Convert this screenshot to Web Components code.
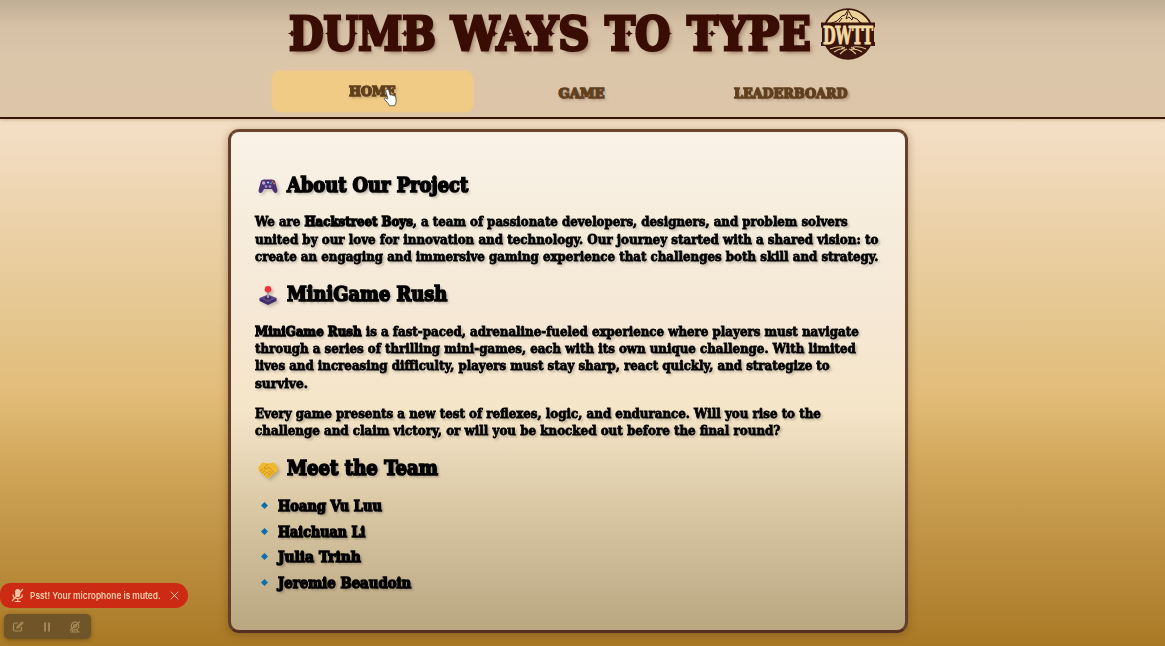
<!DOCTYPE html>
<html lang="en">
<head>
<meta charset="utf-8">
<title>Dumb Ways to Type</title>
<style>
html,body{margin:0;height:100%;overflow:hidden}
body{font-family:"DejaVu Serif","Liberation Serif",serif;font-weight:bold;color:#020100}
</style>
</head>
<body>
<dwtt-app></dwtt-app>
<script>
const define = (name, html, ready) => {
  const tpl = document.createElement('template');
  tpl.innerHTML = html;
  customElements.define(name, class extends HTMLElement {
    connectedCallback() {
      if (!this.shadowRoot) this.attachShadow({mode: 'open'}).append(tpl.content.cloneNode(true));
      if (ready) ready(this, this.shadowRoot);
    }
  });
};

/* A single line of text condensed or widened to the width in its w attribute. */
define('fit-line', `<style>
:host{display:block;flex:none;white-space:nowrap;line-height:inherit}
span{display:inline-block;transform-origin:0 50%;white-space:pre}
::slotted(b){-webkit-text-stroke:1.4px currentColor}
</style><span><slot></slot></span>`, (el, root) => {
  const w = +el.getAttribute('w'), s = root.querySelector('span');
  el.style.width = w + 'px';
  s.style.transform = 'scaleX(' + w / s.offsetWidth + ')';
});

define('dwtt-logo', `<style>:host{display:block;width:56px;height:56px}svg{display:block;overflow:visible}</style>
<svg width="56" height="56" viewBox="0 0 56 56">
<circle cx="28" cy="28" r="25.8" fill="#3c150c"/>
<path d="M5 22A23.7 23.7 0 0 1 51 22Z" fill="#ead197"/>
<path d="M9 18l8-3 5-5 3-1 3-5 4 7 5 2 4 4 6 2M28 6l-2 7 3-2 3 3 1-3M22 12l-3 4M38 14l2 3" fill="none" stroke="#3c150c" stroke-width="1"/>
<path d="M1 16.500h54v5h-1v14.500h1v4H1v-4h1V21.500H1z" fill="#3c150c"/>
<text x="3" y="37.500" font-family="DejaVu Serif" font-size="25" font-weight="bold" textLength="50" lengthAdjust="spacingAndGlyphs" fill="#f1daa3" stroke="#f1daa3" stroke-width="1.100">DWTT</text>
<path d="M10 43q8-3 13-2M33 41q7-1 13 2M14 46q6-4 11-3M31 43q7 0 11 3M20 48q4-4 7-5M36 48q-4-4-7-5M25 41l-4 2M31 41l4 2" fill="none" stroke="#dfc18b" stroke-width="1.1"/>
</svg>`);

/* The letters carry small spurs at half height, at the x positions below. */
define('site-title', `<style>
:host{display:flex;justify-content:flex-start;padding-left:289px;height:68px;position:relative;color:#390d03;font-size:46px;line-height:68px;text-shadow:3px 3px 4px #5b3b2980;-webkit-text-stroke:3px currentColor}
.d{margin-right:15px}.w{margin-right:16px}.t{margin-right:17px}
dwtt-logo{margin:6px 0 0 9px;-webkit-text-stroke:0;text-shadow:none}
.spurs{position:absolute;left:288px;top:0}
</style>
<fit-line class="d" w="147">DUMB</fit-line><fit-line class="w" w="138">WAYS</fit-line><fit-line class="t" w="65">TO</fit-line><fit-line w="124">TYPE</fit-line>
<dwtt-logo></dwtt-logo>
<svg class="spurs" width="524" height="68" fill="#390d03"></svg>`, (el, root) => {
  const ns = 'http://www.w3.org/2000/svg', svg = root.querySelector('.spurs');
  for (const x of [4, 32, 41, 66, 78, 106, 117, 173, 206, 220, 240, 263, 328, 341, 351, 380, 410, 424, 443, 465, 503]) {
    const p = document.createElementNS(ns, 'path');
    p.setAttribute('d', `M${x - 4} 33.500l2.500-1 1.500-2.500 1.500 2.500 2.500 1-2.500 1-1.500 2.500-1.500-2.500z`);
    svg.append(p);
  }
});

define('nav-item', `<style>
:host{display:flex;align-items:center;justify-content:center;width:201px;height:41px;border-radius:8px;color:#60401e;font-size:13.2px;line-height:18px;text-shadow:2px 2px 3px #5b3b2980;-webkit-text-stroke:1.4px currentColor}
:host([active]){background:#f0cb86;box-shadow:0 0 3px #f0cb86}
fit-line{margin-top:4px}
:host([active]) fit-line{margin-top:1px}
</style><fit-line><slot></slot></fit-line>`, (el, root) => {
  const f = root.querySelector('fit-line'), s = f.shadowRoot.querySelector('span'), w = +el.getAttribute('w') - 1;
  f.style.width = w + 'px';
  s.style.transform = 'scaleX(' + w / s.offsetWidth + ')';
});

define('site-header', `<style>
:host{display:block;box-sizing:border-box;height:119px;border-bottom:2px solid #35150a;background:linear-gradient(#bfad95,#d6c0a5 25px,#dcc6aa 60px,#dcc5a8);box-shadow:0 1px 4px #80602e55;position:relative}
nav{display:flex;gap:8px;margin:3px 0 0 272px}
.cursor{position:absolute;left:383px;top:88px}
</style>
<site-title></site-title>
<nav><nav-item w="48" active>HOME</nav-item><nav-item w="47">GAME</nav-item><nav-item w="115">LEADERBOARD</nav-item></nav>
<svg class="cursor" width="15" height="19" viewBox="0 0 14 18"><path d="M3.4 1.3q1.3-.6 1.9.8l1.500 4.700q1-.8 1.800.1 1-.5 1.600.5 1.400-.3 1.700 1.200l.5 3.200q.1 3-1.600 5H6.100Q4.500 13.500 1.300 11q-.4-1.400 1.200-1.500l2 .9-2-7.400q-.3-1.200.9-1.700z" fill="#fff" stroke="#4a4741" stroke-width=".8"/></svg>`);

const icons = {
  pad: '<path d="M3 5Q4 3 7 3.5h6Q16 3 17 5l2.4 9q.3 3-2 3-1.5 0-3.4-4H6q-1.900 4-3.400 4-2.300 0-2-3z" fill="#4b3272"/><circle cx="5.700" cy="7" r="1.700" fill="#b9aee0"/><circle cx="8" cy="10.500" r="1.300" fill="#a99bd0"/><circle cx="12" cy="10.500" r="1.300" fill="#a99bd0"/><circle cx="10" cy="6.500" r="1" fill="#ded7f4"/><circle cx="14.500" cy="5.500" r="1" fill="#e35e45"/><circle cx="16" cy="7.500" r="1" fill="#b87850"/><circle cx="13" cy="7.300" r="1" fill="#3a9ac8"/>',
  stick: '<path d="M1.500 12v3l8.500 4 8.500-4v-3z" fill="#3f2d67"/><path d="M1.500 12L10 8.500l8.500 3.500-8.500 4z" fill="#5c4887"/><ellipse cx="10" cy="12" rx="3" ry="1.500" fill="#392653"/><path d="M9 5h2v7H9z" fill="#a29aad"/><circle cx="10" cy="3.300" r="3.300" fill="#f13137"/>',
  hands: '<path d="M.5 7L4 2.500l6 1 6-1L19.500 7v4L11 18q-2 .5-3-1L.8 11z" fill="#f0b92d"/><path d="M10 4L6 8q1.500 2.500 5-.5l6 5.500M2 11l3-2M4 13l3-2.500M6 15l3-3M9 16.500l2-2M11 11l4 3.500M9.500 12.500l3.500 3" fill="none" stroke="#c98a22" stroke-width=".9"/>'
};
define('section-title', `<style>
:host{display:flex;align-items:center;height:28px;margin:15.1px 0 14.300px;font-size:20.300px;line-height:28px;-webkit-text-stroke:1.700px currentColor}
svg{margin:3px 9px 0 3px;filter:drop-shadow(2px 2px 1.500px #0003);flex:none}
</style><svg width="20" height="20" viewBox="0 0 20 20"></svg><fit-line><slot></slot></fit-line>`, (el, root) => {
  root.querySelector('svg').innerHTML = icons[el.getAttribute('icon')];
  const s = root.querySelector('fit-line').shadowRoot.querySelector('span'), w = +el.getAttribute('w') - 1;
  s.parentNode.host.style.width = w + 'px';
  s.style.transform = 'scaleX(' + w / s.offsetWidth + ')';
});

define('text-block', `<style>:host{display:block;line-height:17.350px;font-size:13.800px;-webkit-text-stroke:.8px currentColor}::slotted(fit-line){height:17.350px}</style><slot></slot>`);

define('team-member', `<style>
:host{display:flex;align-items:center;height:25.500px;line-height:25.500px;font-size:14.600px;-webkit-text-stroke:1.400px currentColor}
svg{margin:0 10px 0 6px;flex:none}
</style><svg width="7" height="7" viewBox="0 0 7 7"><path d="M3.500 0L7 3.500 3.500 7 0 3.500z" fill="#0870ae"/></svg><slot></slot>`);

define('about-panel', `<style>
:host{display:block;box-sizing:border-box;width:680px;height:504px;margin:10px 0 0 228px;padding:23.900px 23.500px;border:3px solid;border-color:#6d452b #64402a #53301f;border-radius:11px;background:linear-gradient(#faf2e8,#f6eddd 17%,#f5e8d6 34%,#f5e5c8 56%,#dccaa7 74%,#b9a782);box-shadow:0 2px 9px #61401e70;text-shadow:2px 2px 3px #0005}
.next{margin-top:12.600px}
.team{margin-top:-3.600px}
</style>
<section-title icon="pad" w="182">About Our Project</section-title>
<text-block>
<fit-line w="593">We are <b>Hackstreet Boys</b>, a team of passionate developers, designers, and problem solvers</fit-line>
<fit-line w="623.500">united by our love for innovation and technology. Our journey started with a shared vision: to</fit-line>
<fit-line w="623.500">create an engaging and immersive gaming experience that challenges both skill and strategy.</fit-line>
</text-block>
<section-title icon="stick" w="161">MiniGame Rush</section-title>
<text-block>
<fit-line w="603.500"><b>MiniGame Rush</b> is a fast-paced, adrenaline-fueled experience where players must navigate</fit-line>
<fit-line w="600.500">through a series of thrilling mini-games, each with its own unique challenge. With limited</fit-line>
<fit-line w="574.500">lives and increasing difficulty, players must stay sharp, react quickly, and strategize to</fit-line>
<fit-line w="53">survive.</fit-line>
</text-block>
<text-block class="next">
<fit-line w="565.500">Every game presents a new test of reflexes, logic, and endurance. Will you rise to the</fit-line>
<fit-line w="525">challenge and claim victory, or will you be knocked out before the final round?</fit-line>
</text-block>
<section-title icon="hands" w="152">Meet the Team</section-title>
<div class="team">
<team-member><fit-line w="103.500">Hoang Vu Luu</fit-line></team-member>
<team-member><fit-line w="87.500">Haichuan Li</fit-line></team-member>
<team-member><fit-line w="82.500">Julia Trinh</fit-line></team-member>
<team-member><fit-line w="133">Jeremie Beaudoin</fit-line></team-member>
</div>`);

define('mute-toast', `<style>
:host{display:flex;align-items:center;box-sizing:border-box;width:188px;height:25px;padding-left:11px;border-radius:10px 12.500px 12.500px 10px;background:#cd2a14;color:#f1cfae;font:600 9.200px/24px Inter,"Liberation Sans",sans-serif}
svg{flex:none}
fit-line{margin:0 9px 0 6px}
</style>
<svg width="13" height="15" viewBox="0 0 13 15" fill="none" stroke="#efc6a4" stroke-width="1.200"><rect x="4.700" y="1.500" width="4" height="7" rx="2" fill="#efc6a4"/><path d="M2 6.500q0 4 4.700 4t4.700-4M6.700 10.500v3M3.700 13.500h6M12 1L1 13"/></svg>
<fit-line w="131">Psst! Your microphone is muted.</fit-line>
<svg width="9" height="9" viewBox="0 0 9 9" stroke="#efc6a4" stroke-width="1"><path d="M.7.7l7.600 7.600M8.300.7L.7 8.300"/></svg>`);

define('record-bar', `<style>
:host{display:grid;grid-template-columns:28px 29px 28px;box-sizing:border-box;width:87px;height:25px;border-radius:5px;background:#6f5528;box-shadow:0 1px 4px #50350c80}
div{display:grid;place-items:center}
svg{fill:none;stroke:#a88b59;stroke-width:1.200}
</style>
<div><svg width="12" height="12" viewBox="0 0 12 12"><path d="M6 2H3Q1.500 2 1.500 3.500v5Q1.500 10 3 10h5q1.500 0 1.500-1.500V6M5 7l.4-1.500L10 1l1 1-4.500 4.500z"/></svg></div>
<div><svg width="10" height="12" viewBox="0 0 10 12"><path d="M3 1.500v9M7 1.500v9" stroke-width="1.800"/></svg></div>
<div><svg width="12" height="12" viewBox="0 0 12 12"><circle cx="6" cy="5" r="3.800"/><circle cx="6" cy="5" r="1.500"/><path d="M1.500 11h9M1 9.500L11 .5M4 9l-1 2M8 9l1 2"/></svg></div>`);

define('dwtt-app', `<style>
:host{display:block;position:relative;height:646px;overflow:hidden;background:linear-gradient(#f4dfc7 120px,#ecd2aa 220px,#e4c68e 320px,#e2bc78 395px,#d0a558 470px,#bd9041 550px,#a97925 646px)}
.overlay{position:absolute;left:0;top:583px;display:flex;flex-direction:column;gap:6px}
record-bar{margin-left:4px}
</style>
<site-header></site-header><about-panel></about-panel>
<div class="overlay"><mute-toast></mute-toast><record-bar></record-bar></div>`);
</script>
</body>
</html>
